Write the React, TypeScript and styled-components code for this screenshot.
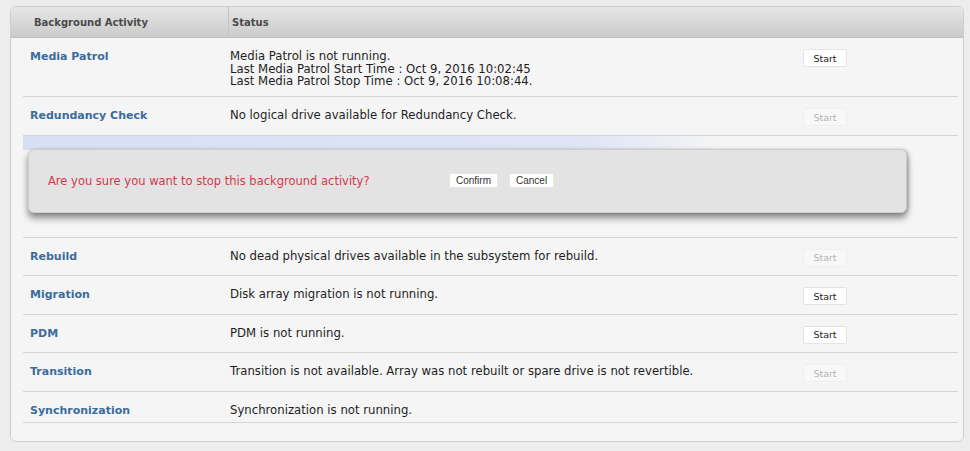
import React from "react";
import styled, { createGlobalStyle } from "styled-components";

const GlobalStyle = createGlobalStyle`
  html, body {
    margin: 0;
    padding: 0;
    background: #ededed;
  }
  body {
    font-family: "DejaVu Sans", "Open Sans", sans-serif;
    font-size: 11px;
    color: #222;
  }
`;

const Page = styled.div`
  padding: 6px 6px 10px 10px;
`;

const Panel = styled.section`
  background: #f5f5f5;
  border: 1px solid #cfcfcf;
  border-radius: 6px;
  padding-bottom: 18px;
  overflow: hidden;
`;

const HeaderRow = styled.div`
  display: grid;
  grid-template-columns: 194px 1fr;
  height: 30px;
  align-items: center;
  background: linear-gradient(#e6e6e6, #d3d3d3 70%, #cbcbcb);
  border-bottom: 1px solid #c2c2c2;
  padding-left: 23px;
  font-size: 10px;
  font-weight: bold;
  color: #4a4a4a;
`;

const HeaderCell = styled.div<{ $divider?: boolean }>`
  height: 100%;
  display: flex;
  align-items: center;
  padding-left: ${(p) => (p.$divider ? "3px" : "0")};
  border-left: ${(p) => (p.$divider ? "1px solid #c4c4c4" : "none")};
`;

const Body = styled.div`
  margin: 0 5px 0 12px;
`;

const Row = styled.div<{ $compact?: boolean }>`
  display: grid;
  grid-template-columns: 207px 1fr 155px;
  align-items: start;
  padding: 10px 0 ${(p) => (p.$compact ? "5px" : "8.5px")};
  border-bottom: 1px solid #d6d6d6;
`;

const Name = styled.div`
  padding: 2px 0 0 7px;
  line-height: 13px;
  font-weight: bold;
  color: #3a6c9c;
`;

const Status = styled.div`
  padding-top: 2px;
  font-size: 11.7px;
  line-height: 12.5px;
  color: #1e1e1e;
`;

const StartButton = styled.button<{ $disabled?: boolean }>`
  justify-self: start;
  margin-top: 1px;
  width: 44px;
  height: 18px;
  padding: 0;
  font-family: "DejaVu Sans", "Open Sans", sans-serif;
  font-size: 9.5px;
  color: ${(p) => (p.$disabled ? "#b4b4b4" : "#222")};
  background: ${(p) => (p.$disabled ? "#f8f8f8" : "#ffffff")};
  border: 1px solid ${(p) => (p.$disabled ? "#efefef" : "#e4e4e4")};
  border-radius: 2px;
`;

const ConfirmRow = styled.div`
  box-sizing: border-box;
  height: 102px;
  border-bottom: 1px solid #d6d6d6;
  background: linear-gradient(
      to right,
      rgba(214, 222, 244, 0.95),
      rgba(214, 222, 244, 0.7) 60%,
      rgba(214, 222, 244, 0) 75%
    )
    top / 100% 14px no-repeat;
  padding: 13px 51px 0 5px;
`;

const Dialog = styled.div`
  box-sizing: border-box;
  height: 64px;
  display: grid;
  grid-template-columns: 401px auto;
  align-items: center;
  padding-left: 19px;
  background: #e3e3e3;
  border: 1px solid #cdcdcd;
  border-radius: 6px;
  box-shadow: 0 5px 7px rgba(0, 0, 0, 0.45), 2px 0 3px rgba(0, 0, 0, 0.15);
`;

const Message = styled.span`
  color: #d8364c;
  font-size: 11.5px;
`;

const DialogActions = styled.div`
  display: flex;
  gap: 11px;
`;

const DialogButton = styled.button`
  height: 15px;
  padding: 0 6px;
  font-family: "Liberation Sans", Arial, sans-serif;
  font-size: 10px;
  color: #333;
  background: #ffffff;
  border: 1px solid #e6e6e6;
  border-radius: 2px;
`;

interface IActivity {
  name: string;
  status: string[];
  action: "on" | "off" | "none";
}

const topRows: IActivity[] = [
  {
    name: "Media Patrol",
    status: [
      "Media Patrol is not running.",
      "Last Media Patrol Start Time : Oct 9, 2016 10:02:45",
      "Last Media Patrol Stop Time : Oct 9, 2016 10:08:44.",
    ],
    action: "on",
  },
  {
    name: "Redundancy Check",
    status: ["No logical drive available for Redundancy Check."],
    action: "off",
  },
];

const bottomRows: IActivity[] = [
  {
    name: "Rebuild",
    status: ["No dead physical drives available in the subsystem for rebuild."],
    action: "off",
  },
  { name: "Migration", status: ["Disk array migration is not running."], action: "on" },
  { name: "PDM", status: ["PDM is not running."], action: "on" },
  {
    name: "Transition",
    status: ["Transition is not available. Array was not rebuilt or spare drive is not revertible."],
    action: "off",
  },
  { name: "Synchronization", status: ["Synchronization is not running."], action: "none" },
];

const ActivityRow: React.FC<{ data: IActivity }> = ({ data }) => (
  <Row $compact={data.action === "none"}>
    <Name>{data.name}</Name>
    <Status>
      {data.status.map((line) => (
        <div key={line}>{line}</div>
      ))}
    </Status>
    {data.action !== "none" && (
      <StartButton $disabled={data.action === "off"}>Start</StartButton>
    )}
  </Row>
);

const App: React.FC = () => {
  return (
    <Page>
      <GlobalStyle />
      <Panel>
        <HeaderRow>
          <HeaderCell>Background Activity</HeaderCell>
          <HeaderCell $divider>Status</HeaderCell>
        </HeaderRow>
        <Body>
          {topRows.map((row) => (
            <ActivityRow key={row.name} data={row} />
          ))}
          <ConfirmRow>
            <Dialog>
              <Message>Are you sure you want to stop this background activity?</Message>
              <DialogActions>
                <DialogButton>Confirm</DialogButton>
                <DialogButton>Cancel</DialogButton>
              </DialogActions>
            </Dialog>
          </ConfirmRow>
          {bottomRows.map((row) => (
            <ActivityRow key={row.name} data={row} />
          ))}
        </Body>
      </Panel>
    </Page>
  );
};

export default App;
